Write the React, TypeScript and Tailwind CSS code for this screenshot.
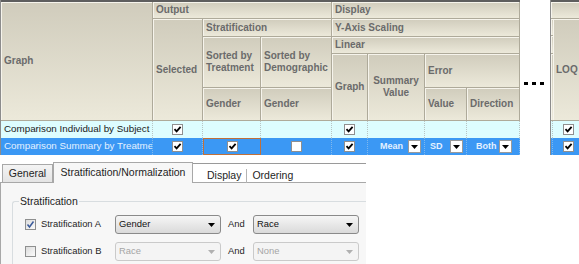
import React from 'react';

const HEAD =
  'flex items-center px-[3px] bg-gradient-to-b from-[#d0ccbc] to-[#ece9da] border-r border-b border-[#aeaa9a] shadow-[inset_1px_1px_0_#f6f4ec] text-[#6b6b6b] font-bold text-[10px] leading-[12px] overflow-hidden';

function Check({ checked = true }: { checked?: boolean }) {
  return (
    <span className="w-[11px] h-[11px] bg-white border border-[#8f8f8f] flex items-center justify-center">
      {checked && (
        <svg width="9" height="9" viewBox="0 0 9 9">
          <path d="M1.5 4.2 L3.6 6.4 L7.6 1.8" stroke="#000" strokeWidth="1.8" fill="none" />
        </svg>
      )}
    </span>
  );
}

function DropBtn() {
  return (
    <span className="w-[13px] h-[13px] bg-white border border-[#9a9a9a] flex items-center justify-center shrink-0">
      <svg width="7" height="4" viewBox="0 0 7 4">
        <path d="M0 0 H7 L3.5 4 Z" fill="#000" />
      </svg>
    </span>
  );
}

function Combo({ value, disabled = false }: { value: string; disabled?: boolean }) {
  return (
    <div
      className={`w-[106px] h-[19px] rounded-[3px] border flex items-center justify-between pl-[3px] pr-[5px] ${
        disabled
          ? 'border-[#cacaca] bg-[#f4f4f4] text-[#a5a5a5]'
          : 'border-[#8a8a8a] bg-gradient-to-b from-[#f6f6f6] to-[#dadada] text-[#111]'
      }`}
    >
      <span>{value}</span>
      <svg width="7" height="4" viewBox="0 0 7 4">
        <path d="M0 0 H7 L3.5 4 Z" fill={disabled ? '#b0b0b0' : '#000'} />
      </svg>
    </div>
  );
}

function FormCheck({ checked }: { checked: boolean }) {
  return (
    <span className="w-[11px] h-[11px] border border-[#8e8f8f] bg-gradient-to-br from-[#dcdcdc] to-[#fbfbfb] flex items-center justify-center shrink-0">
      {checked && (
        <svg width="9" height="9" viewBox="0 0 9 9">
          <path d="M1.5 4.5 L3.5 7 L7.5 1.5" stroke="#3b5b9b" strokeWidth="1.5" fill="none" />
        </svg>
      )}
    </span>
  );
}

export default function App() {
  const row1 = 'bg-[#ddfdff] border-r border-dotted border-[#b8c4c4] h-[17px] flex items-center';
  const row2 = 'bg-[#3b98f4] border-r border-dotted border-[#7fb8ee] h-[17px] flex items-center text-[#e4f1ff]';

  return (
    <div className="w-[579px] h-[264px] bg-white overflow-hidden relative font-['Liberation_Sans',sans-serif]">
      {/* grids */}
      <div className="flex items-start">
        <div className="w-[520px] shrink-0 border-l border-[#8c8c8c]">
          <div className="h-[2px] bg-[#5e5e5e]" />
          <div className="grid grid-cols-[152px_50px_58px_71px_36px_57px_42px_53px] grid-rows-[17px_18px_17px_34px_33px_17px_17px]">
            <div className={`${HEAD} col-start-1 row-start-1 row-span-5 whitespace-nowrap`}>Graph</div>
            <div className={`${HEAD} col-start-2 row-start-1 col-span-3 whitespace-nowrap`}>Output</div>
            <div className={`${HEAD} col-start-5 row-start-1 col-span-4 whitespace-nowrap`}>Display</div>
            <div className={`${HEAD} col-start-2 row-start-2 row-span-4 whitespace-nowrap`}>Selected</div>
            <div className={`${HEAD} col-start-3 row-start-2 col-span-2 whitespace-nowrap`}>Stratification</div>
            <div className={`${HEAD} col-start-5 row-start-2 col-span-4 whitespace-nowrap`}>Y-Axis Scaling</div>
            <div className={`${HEAD} col-start-3 row-start-3 row-span-2`}>Sorted by Treatment</div>
            <div className={`${HEAD} col-start-4 row-start-3 row-span-2`}>Sorted by Demographic</div>
            <div className={`${HEAD} col-start-5 row-start-3 col-span-4 whitespace-nowrap`}>Linear</div>
            <div className={`${HEAD} col-start-5 row-start-4 row-span-2 whitespace-nowrap`}>Graph</div>
            <div className={`${HEAD} col-start-6 row-start-4 row-span-2 justify-center text-center`}>Summary Value</div>
            <div className={`${HEAD} col-start-7 row-start-4 col-span-2 whitespace-nowrap`}>Error</div>
            <div className={`${HEAD} col-start-3 row-start-5 whitespace-nowrap`}>Gender</div>
            <div className={`${HEAD} col-start-4 row-start-5 whitespace-nowrap`}>Gender</div>
            <div className={`${HEAD} col-start-7 row-start-5 whitespace-nowrap`}>Value</div>
            <div className={`${HEAD} col-start-8 row-start-5 whitespace-nowrap`}>Direction</div>

            {/* row 1 */}
            <div className={`${row1} px-[3px] text-[9.8px] text-[#1b1b1b] whitespace-nowrap overflow-hidden`}>Comparison Individual by Subject</div>
            <div className={`${row1} justify-center`}><Check /></div>
            <div className={row1} />
            <div className={row1} />
            <div className={`${row1} justify-center`}><Check /></div>
            <div className={row1} />
            <div className={row1} />
            <div className={row1} />

            {/* row 2 */}
            <div className={`${row2} px-[3px] text-[9.8px] whitespace-nowrap overflow-hidden`}>Comparison Summary by Treatment</div>
            <div className={`${row2} justify-center`}><Check /></div>
            <div className={`${row2} justify-center border border-solid border-[#c0703a]`}><Check /></div>
            <div className={`${row2} justify-center`}><Check checked={false} /></div>
            <div className={`${row2} justify-center`}><Check /></div>
            <div className={`${row2} justify-between pl-[12px] pr-[3px] text-[9px] font-bold`}>Mean<DropBtn /></div>
            <div className={`${row2} justify-between pl-[5px] pr-[3px] text-[9px] font-bold`}>SD<DropBtn /></div>
            <div className={`${row2} justify-between pl-[9px] pr-[7px] text-[9px] font-bold`}>Both<DropBtn /></div>
          </div>
        </div>

        {/* ellipsis */}
        <div className="w-[30px] shrink-0 flex gap-[4px] pl-[4px] pt-[82px]">
          <span className="w-[4px] h-[3px] bg-black" />
          <span className="w-[4px] h-[3px] bg-black" />
          <span className="w-[4px] h-[3px] bg-black" />
        </div>

        <div className="flex-1 overflow-hidden border-l border-[#8c8c8c]">
          <div className="h-[2px] bg-[#5e5e5e]" />
          <div className="grid grid-cols-[2px_32px] grid-rows-[17px_17px_18px_34px_33px_17px_17px]">
            <div className={`${HEAD} col-start-1 row-start-1 col-span-2`} />
            <div className={`${HEAD} col-start-1 row-start-2 px-0`} />
            <div className={`${HEAD} col-start-1 row-start-3 px-0`} />
            <div className={`${HEAD} col-start-1 row-start-4 row-span-2 px-0`} />
            <div className={`${HEAD} col-start-2 row-start-2 row-span-4 whitespace-nowrap`}>LOQ</div>
            <div className={row1} />
            <div className={`${row1} justify-center`}><Check /></div>
            <div className={row2} />
            <div className={`${row2} justify-center`}><Check /></div>
          </div>
        </div>
      </div>

      {/* tab control */}
      <div className="w-[366px] mt-[8px] relative text-[10.5px] text-[#1e1e1e]">
        <div className="flex items-end h-[20px] border-b border-[#a8a8a8]">
          <div className="ml-[2px] w-[51px] h-[18px] border border-b-0 border-[#a8a8a8] bg-gradient-to-b from-[#f4f4f4] to-[#e4e4e4] flex items-center justify-center">General</div>
          <div className="w-[140px] h-[21px] -mb-px border border-b-0 border-[#a8a8a8] bg-[#f7f7f7] flex items-center justify-center whitespace-nowrap">Stratification/Normalization</div>
          <div className="flex-1 self-start h-px bg-[#9a9a9a]" />
          <div className="absolute left-[207px] top-[5px] flex items-center">
            <span>Display</span>
            <span className="w-px h-[14px] bg-[#b4b4b4] mx-[5px]" />
            <span>Ordering</span>
          </div>
        </div>
        <div className="h-[81px] bg-[#f7f7f7] border-l border-[#a8a8a8] pl-[11px] pt-[18px]">
          <div className="relative border-l border-t border-[#d8dde0] rounded-tl-[3px] h-[70px] pt-[13px] pl-[12px] text-[9.4px]">
            <span className="absolute left-[6px] -top-[7px] px-[1px] bg-[#f7f7f7] text-[10.5px] leading-[12px]">Stratification</span>
            <div className="flex items-center h-[19px]">
              <FormCheck checked />
              <span className="ml-[5px] w-[74px]">Stratification A</span>
              <Combo value="Gender" />
              <span className="ml-[7px] w-[25px]">And</span>
              <Combo value="Race" />
            </div>
            <div className="flex items-center h-[19px] mt-[8px]">
              <FormCheck checked={false} />
              <span className="ml-[5px] w-[74px]">Stratification B</span>
              <Combo value="Race" disabled />
              <span className="ml-[7px] w-[25px]">And</span>
              <Combo value="None" disabled />
            </div>
          </div>
        </div>
      </div>
    </div>
  );
}
